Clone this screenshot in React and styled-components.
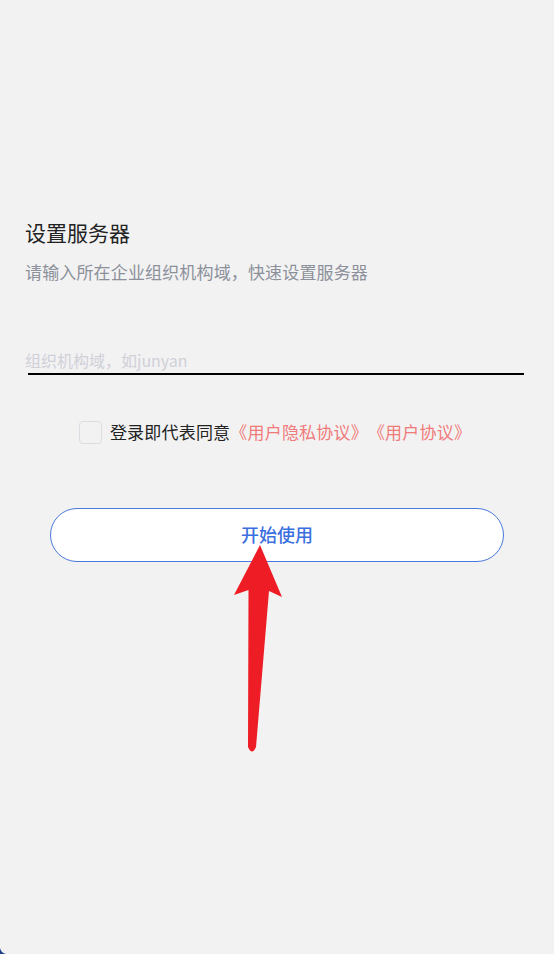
import React from 'react'
import styled, { createGlobalStyle } from 'styled-components'

const GlobalStyle = createGlobalStyle`
  html, body {
    margin: 0;
    padding: 0;
    background: #f2f2f2;
  }
  body {
    font-family: "Noto Sans CJK SC", "Noto Sans", Roboto, sans-serif;
  }
`

const App = () => {
  return (
    <Page>
      <GlobalStyle />
      <Title>设置服务器</Title>
      <SubTitle>请输入所在企业组织机构域，快速设置服务器</SubTitle>
      <Field>
        <Input placeholder="组织机构域，如junyan" />
        <Underline />
      </Field>
      <Agreement>
        <CheckBox type="checkbox" />
        <span>登录即代表同意</span>
        <LinkText>《用户隐私协议》</LinkText>
        <LinkText>《用户协议》</LinkText>
      </Agreement>
      <StartButton>开始使用</StartButton>

      <Arrow width="554" height="954" viewBox="0 0 554 954">
        <path
          d="M260 545 L282 597 L269 591 L256 747 Q252 756 248 747 L248.5 590 L234 595 Z"
          fill="#ee1c25"
        />
      </Arrow>
      <Corner width="8" height="8" viewBox="0 0 8 8">
        <path d="M0 2 Q1 7 6 8 L0 8 Z" fill="#1d3f8a" />
      </Corner>
    </Page>
  )
}

const Page = styled.main`
  position: relative;
  min-height: 954px;
  box-sizing: border-box;
  padding-top: 218px;
  overflow: hidden;
`

const Title = styled.h1`
  margin: 0 0 0 25px;
  font-size: 21px;
  line-height: 28px;
  font-weight: 400;
  color: #222222;
`

const SubTitle = styled.p`
  margin: 14px 0 0 25px;
  font-size: 17px;
  line-height: 24px;
  letter-spacing: 0.15px;
  color: #8c909b;
`

const Field = styled.div`
  margin: 62px 30px 0 25px;
`

const Input = styled.input`
  display: block;
  width: 100%;
  height: 27px;
  box-sizing: border-box;
  border: none;
  outline: none;
  background: transparent;
  padding: 0;
  font-family: "Noto Sans CJK SC", Roboto, sans-serif;
  font-size: 16px;
  line-height: 24px;
  color: #222;
  &::placeholder {
    color: #d0d0d9;
  }
`

const Underline = styled.div`
  height: 2px;
  margin-left: 3px;
  background: #000;
`

const Agreement = styled.div`
  display: flex;
  align-items: center;
  justify-content: center;
  margin: 45px 0 0 0;
  padding-right: 4px;
  height: 24px;
  font-size: 17px;
  line-height: 24px;
  letter-spacing: 0.2px;
  color: #222;
`

const CheckBox = styled.input`
  appearance: none;
  width: 23px;
  height: 23px;
  margin: 0 8px 0 0;
  box-sizing: border-box;
  border: 1px solid #dcdce2;
  border-radius: 4px;
  background: #f2f2f2;
`

const LinkText = styled.span`
  color: #f07a7a;
`

const StartButton = styled.button`
  display: block;
  width: calc(100% - 100px);
  height: 54px;
  margin: 64px 50px 0 50px;
  padding-bottom: 3px;
  border: 1px solid #4a78dc;
  border-radius: 27px;
  background: #ffffff;
  color: #3b6fe0;
  font-family: "Noto Sans CJK SC", sans-serif;
  font-size: 18px;
  font-weight: 500;
  cursor: pointer;
`

const Arrow = styled.svg`
  position: absolute;
  left: 0;
  top: 0;
  pointer-events: none;
`

const Corner = styled.svg`
  position: absolute;
  left: 0;
  bottom: 0;
`

export default App
